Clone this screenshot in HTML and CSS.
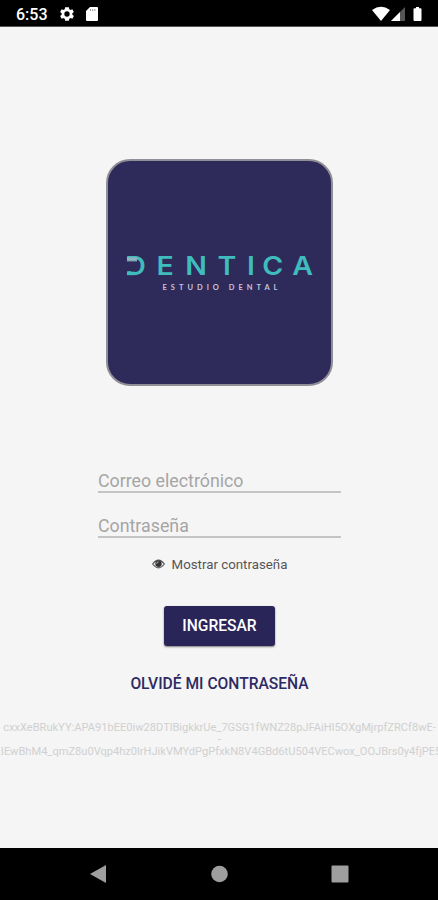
FILE: index.html
```html
<!DOCTYPE html>
<html lang="es">
<head>
    <meta charset="UTF-8">
    <meta name="viewport" content="width=device-width, initial-scale=1.0">
    <title>Dentica</title>
    <link rel="stylesheet" href="styles.css">
</head>
<body>
    <header class="status-bar">
        <span class="clock">6:53</span>
        <svg class="gear" width="16" height="16" viewBox="0 0 24 24">
            <path fill="#fff" fill-rule="evenodd" d="M20 13.200c.1-.8.1-1.600 0-2.400l2.300-1.800-2.300-4-2.700 1.100a8 8 0 0 0-2-1.200L14.900 2H9.100l-.4 2.900a8 8 0 0 0-2 1.200L4 5 1.700 9 4 10.800a9 9 0 0 0 0 2.400L1.700 15 4 19l2.700-1.100a8 8 0 0 0 2 1.200l.4 2.900h5.800l.4-2.900a8 8 0 0 0 2-1.200L20 19l2.300-4zM12 16a4 4 0 1 1 0-8 4 4 0 0 1 0 8z"/>
        </svg>
        <svg class="card" width="12" height="14" viewBox="0 0 12 14">
            <path fill="#fff" d="M4 0h7q1 0 1 1v12q0 1-1 1H1q-1 0-1-1V4z"/>
            <path stroke="#999" stroke-width="1" d="M4.500 2v2M6.700 2v2M8.900 2v2"/>
        </svg>
        <svg class="signals" width="52" height="16" viewBox="0 0 52 16">
            <path fill="#fff" d="M0 4Q9 -2.500 18 4L9 15z"/>
            <path fill="#555" d="M33 1v14H19z"/>
            <path fill="#fff" d="M28 6v9h-9z"/>
            <path fill="#fff" d="M44 1h3v1.300h1.500q1 0 1 1V14q0 1-1 1h-6q-1 0-1-1V3.300q0-1 1-1H44z"/>
        </svg>
    </header>

    <main class="login">
        <div class="logo">
            <svg width="223" height="223" viewBox="108 160.300 223 223">
                <text class="brand" transform="scale(1.12 1)" y="274.500" x="111.800 139.700 165.400 194.200 220.500 234.100 261">DENTICA</text>
                <rect class="gap" x="126" y="260" width="6" height="10.500"/>
                <rect class="bar" x="127" y="256" width="8" height="3.500"/>
                <rect class="bar" x="127" y="271" width="8" height="3.500"/>
                <path stroke="#8db5bd" stroke-width="4" d="M127 258.500h10"/>
                <path stroke="#5d7590" stroke-width="1" d="M127 260.500h10" stroke-dasharray="2 1"/>
                <text class="tagline" x="162.500" y="289" textLength="115">ESTUDIO DENTAL</text>
            </svg>
        </div>

        <form class="form">
            <input type="email" placeholder="Correo electrónico">
            <input type="password" placeholder="Contraseña">
            <div class="show-password">
                <svg width="13" height="10" viewBox="0 0 13 10">
                    <path fill="none" stroke="#555" stroke-width="1.100" d="M.6 5Q6.500-2.800 12.400 5 6.500 12.800.6 5z"/>
                    <circle cx="6.500" cy="4.700" r="3.200" fill="#333"/>
                    <path fill="none" stroke="#ddd" stroke-width=".8" d="M4.700 4.700q0-1.700 1.800-1.800"/>
                </svg>
                <span>Mostrar contraseña</span>
            </div>
            <button type="button">INGRESAR</button>
        </form>
        <a class="forgot">OLVIDÉ MI CONTRASEÑA</a>
        <div class="token">
            <span>cxxXeBRukYY:APA91bEE0iw28DTlBigkkrUe_7GSG1fWNZ28pJFAiHl5OXgMjrpfZRCf8wE-</span>
            <span>-</span>
            <span>8EwBhM4_qmZ8u0Vqp4hz0lrHJikVMYdPgPfxkN8V4GBd6tU504VECwox_OOJBrs0y4fjPE5</span>
        </div>
    </main>

    <nav class="nav-bar">
        <svg width="18" height="18" viewBox="0 0 18 18"><path d="M17 0v18L1 9z"/></svg>
        <svg width="18" height="18" viewBox="0 0 18 18"><circle cx="9.500" cy="9" r="8.300"/></svg>
        <svg width="18" height="18" viewBox="0 0 18 18"><rect x=".5" y=".5" width="17" height="17" rx="1"/></svg>
    </nav>
</body>
</html>
```
FILE: styles.css
```css
* {
    box-sizing: border-box;
}

body {
    margin: 0;
    height: 900px;
    display: flex;
    flex-direction: column;
    overflow: hidden;
    font-family: Roboto, "Liberation Sans", sans-serif;
    background-color: #f5f5f5;
}

svg {
    display: block;
}

.status-bar {
    height: 27px;
    padding: 2px 14px 0 16px;
    display: flex;
    align-items: center;
    background-color: #000;
    border-bottom: 1px solid #555;
}

.clock {
    color: #fff;
    font-size: 16px;
    font-weight: 500;
}

.gear {
    margin-left: 11px;
}

.card {
    margin-left: 11px;
}

.signals {
    margin-left: auto;
}

.login {
    flex: 1;
    display: flex;
    flex-direction: column;
    align-items: center;
    padding: 132px 0 0 1px;
}

.logo {
    width: 227px;
    height: 227px;
    border: 2px solid #908f98;
    border-radius: 24px;
    background-color: #2e2a59;
    overflow: hidden;
}

.brand {
    font-family: Inter, sans-serif;
    font-size: 25.500px;
    font-weight: 600;
    fill: #3fbcbd;
}

.gap {
    fill: #2e2a59;
}

.bar {
    fill: #3fbcbd;
}

.tagline {
    font-family: Lato, sans-serif;
    font-size: 7.500px;
    font-weight: 700;
    fill: #c5c2dc;
}

.form {
    width: 243px;
    margin-top: 76px;
    display: flex;
    flex-direction: column;
    align-items: center;
}

input {
    width: 100%;
    height: 31px;
    margin-bottom: 14px;
    padding: 8px 0 0;
    border: none;
    border-bottom: 2px solid #c4c4c4;
    background: none;
    font-family: inherit;
    font-size: 17.800px;
}

input::placeholder {
    color: #a5a5a5;
}

.show-password {
    height: 24px;
    display: flex;
    align-items: center;
    gap: 7px;
    font-size: 13.300px;
    color: #555;
}

button {
    width: 111px;
    height: 40px;
    margin-top: 30px;
    padding: 0;
    border: none;
    border-radius: 3px;
    background-color: #2a2559;
    box-shadow: 0 1px 2px rgba(0, 0, 0, 0.5);
    color: #fff;
    font-family: inherit;
    font-size: 15.600px;
    font-weight: 500;
}

.forgot {
    margin-top: 28px;
    color: #2e2a64;
    font-size: 15.600px;
    font-weight: 500;
    line-height: 20px;
}

.token {
    width: 100%;
    margin-top: 28px;
    display: flex;
    flex-direction: column;
    align-items: center;
    overflow: hidden;
    white-space: nowrap;
    color: #d0d0d0;
    font-size: 11.100px;
    line-height: 12px;
}

.nav-bar {
    height: 52px;
    padding: 0 89px;
    display: flex;
    align-items: center;
    justify-content: space-between;
    background-color: #000;
}

.nav-bar svg {
    fill: #9e9e9e;
}
```
